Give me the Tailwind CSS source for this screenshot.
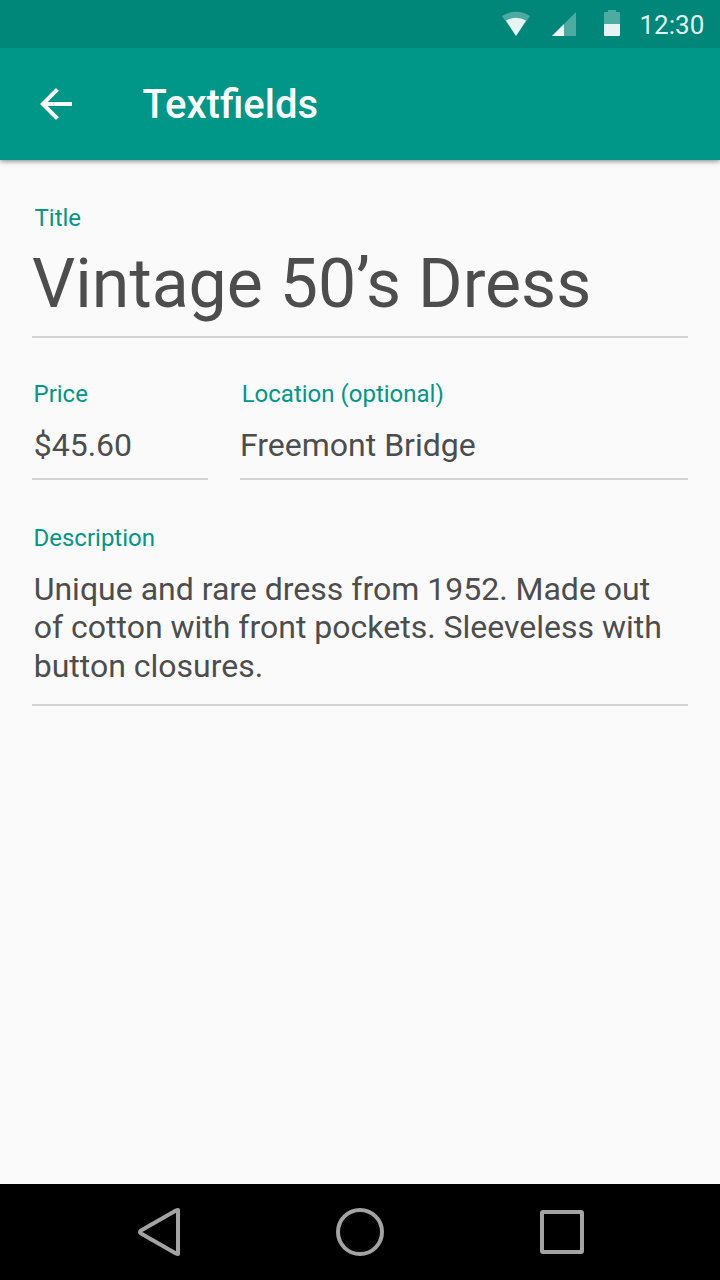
<!DOCTYPE html>
<html lang="en">
<head>
<meta charset="utf-8">
<title>Textfields</title>
<script src="https://cdn.jsdelivr.net/npm/@tailwindcss/browser@4"></script>
</head>
<body class="w-[720px] h-[1280px] overflow-hidden flex flex-col bg-[#fafafa] font-['Roboto',sans-serif] text-[#4d4d4d] antialiased">
  <div class="relative z-10 h-12 shrink-0 bg-[#00877a] flex items-center pl-[500px]">
    <svg class="w-[220px] h-12" viewBox="500 0 220 48" fill="#fff">
      <path fill-opacity=".3" d="M502 16Q516 7.500 530 16L516 36Z"/>
      <path fill-opacity=".87" d="M506 20.500Q516 15 526 20.500L516 36Z"/>
      <path fill-opacity=".3" d="M576 12V36H552Z"/>
      <path fill-opacity=".9" d="M564 24V36H552Z"/>
      <path fill-opacity=".3" d="M604 24V13Q604 12 605 12H608V10H616V12H619Q620 12 620 13V24Z"/>
      <path fill-opacity=".9" d="M604 24H620V35Q620 36 619 36H605Q604 36 604 35Z"/>
      <text x="639.500" y="34" font-size="26" fill-opacity=".9">12:30</text>
    </svg>
  </div>
  <header class="h-28 shrink-0 bg-[#009688] flex items-center pl-8 shadow-[0_1px_5px_rgba(0,0,0,0.5)]">
    <svg class="size-12" viewBox="0 0 24 24" fill="#fff"><path d="M20 11H7.830l5.590-5.590L12 4l-8 8 8 8 1.410-1.410L7.830 13H20v-2z"/></svg>
    <h1 class="ml-[62.500px] mt-[2px] text-[40px] leading-[56px] font-medium text-white">Textfields</h1>
  </header>
  <main class="flex-1 px-8 pt-11">
    <section class="h-[134px] border-b-2 border-[#d4d4d4]">
      <div class="pl-[2.500px] text-2xl leading-[28px] text-[#009688]">Title</div>
      <div class="mt-3 text-[68px] leading-[80px] whitespace-nowrap">Vintage 50’s Dress</div>
    </section>
    <div class="flex gap-8 mt-[42px]">
      <section class="w-44 h-[100px] border-b-2 border-[#d4d4d4]">
        <div class="pl-[1.500px] text-2xl leading-[28px] text-[#009688]">Price</div>
        <div class="mt-[18px] pl-[1.700px] text-[32px] leading-[38px]">$45.60</div>
      </section>
      <section class="flex-1 h-[100px] border-b-2 border-[#d4d4d4]">
        <div class="pl-[1.700px] text-2xl leading-[28px] text-[#009688]">Location (optional)</div>
        <div class="mt-[18px] text-[32px] leading-[38px]">Freemont Bridge</div>
      </section>
    </div>
    <section class="mt-[44px] h-[182px] border-b-2 border-[#d4d4d4]">
      <div class="pl-[1.500px] text-2xl leading-[28px] text-[#009688]">Description</div>
      <div class="mt-[18px] pl-[1.700px] text-[32px] leading-[38.400px] whitespace-nowrap">Unique and rare dress from 1952. Made out<br>of cotton with front pockets. Sleeveless with<br>button closures.</div>
    </section>
  </main>
  <nav class="h-24 shrink-0 bg-black">
    <svg class="w-[720px] h-24" viewBox="0 1184 720 96" fill="none" stroke="#a3a3a3" stroke-width="4" stroke-linejoin="round">
      <path d="M178 1210V1254Q177 1254 176 1253.500L141 1233.500Q139 1232 141 1230.500L176 1210.500Q177 1210 178 1210Z"/>
      <circle cx="360" cy="1232" r="22"/>
      <rect x="542" y="1212" width="40" height="40" rx="1"/>
    </svg>
  </nav>
</body>
</html>
